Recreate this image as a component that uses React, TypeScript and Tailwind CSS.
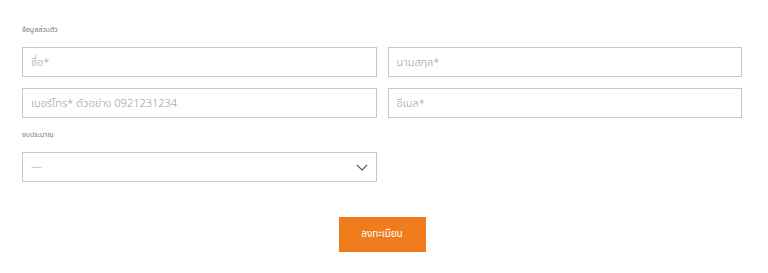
import React, { useState } from "react";

const font = { fontFamily: '"Noto Sans Thai", "Noto Sans", "DejaVu Sans", sans-serif' };

type FieldProps = {
  placeholder: string;
};

const Field: React.FC<FieldProps> = ({ placeholder }) => {
  return (
    <input
      type="text"
      placeholder={placeholder}
      className="h-[30px] w-full border border-[#c6c6c6] bg-white px-[8px] text-[11px] font-light text-[#555] placeholder:text-[#9a9a9a] outline-none"
    />
  );
};

export default function App() {
  const [budget, setBudget] = useState("");

  return (
    <div className="w-[768px] h-[273px] bg-white" style={font}>
      <form className="pl-[22px] pr-[26px] pt-[25px]">
        <p className="text-[7px] leading-[10px] text-[#777]">ข้อมูลส่วนตัว</p>

        <div className="mt-[12px] grid grid-cols-2 gap-x-[11px] gap-y-[11px]">
          <Field placeholder="ชื่อ*" />
          <Field placeholder="นามสกุล*" />
          <Field placeholder="เบอร์โทร* ตัวอย่าง 0921231234" />
          <Field placeholder="อีเมล*" />
        </div>

        <p className="mt-[12px] text-[7px] leading-[10px] text-[#777]">งบประมาณ</p>

        <div className="mt-[12px] grid grid-cols-2 gap-x-[11px]">
          <div className="relative">
            <select
              value={budget}
              onChange={(e) => setBudget(e.target.value)}
              className="h-[30px] w-full appearance-none border border-[#c6c6c6] bg-white px-[8px] text-[11px] font-light text-[#9a9a9a] outline-none"
            >
              <option value="">---</option>
              <option value="1">น้อยกว่า 1 ล้าน</option>
              <option value="2">1 - 3 ล้าน</option>
            </select>
            <svg
              className="pointer-events-none absolute right-[9px] top-[12px]"
              width="12"
              height="7"
              viewBox="0 0 12 7"
              fill="none"
            >
              <path d="M0.8 0.8 L6 6 L11.2 0.8" stroke="#555" strokeWidth="1.2" />
            </svg>
          </div>
        </div>

        <div className="mt-[35px] flex justify-center">
          <button
            type="button"
            className="h-[35px] w-[87px] bg-[#f07c1e] text-[10px] text-white"
          >
            ลงทะเบียน
          </button>
        </div>
      </form>
    </div>
  );
}
